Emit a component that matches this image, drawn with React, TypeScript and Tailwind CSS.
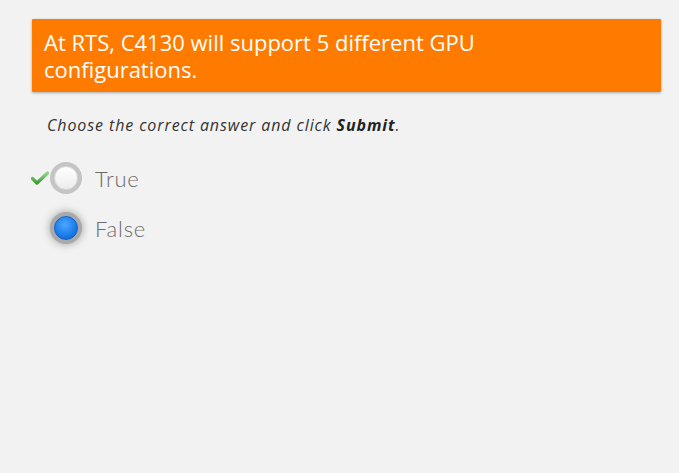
import React from 'react';

interface OptionProps {
  label: string;
  selected?: boolean;
  correct?: boolean;
}

const Option: React.FC<OptionProps> = ({ label, selected, correct }) => {
  return (
    <div className="flex items-center h-[50px]">
      <div className="w-[18px] h-[14px] mr-[1px] flex items-center justify-center">
        {correct && (
          <svg width="18" height="14" viewBox="0 0 18 14">
            <defs>
              <linearGradient id="chk" x1="0" y1="0" x2="0" y2="1">
                <stop offset="0" stopColor="#8fd68a" />
                <stop offset="1" stopColor="#3d9c3a" />
              </linearGradient>
            </defs>
            <path d="M1.5 7.5 L6 12 L16.5 2" fill="none" stroke="url(#chk)" strokeWidth="3.4" strokeLinecap="round" strokeLinejoin="round" />
          </svg>
        )}
      </div>
      {selected ? (
        <div className="w-[32px] h-[32px] rounded-full bg-[#a9a9a9] flex items-center justify-center shadow-[0_0_8px_rgba(0,0,0,0.35)]">
          <div className="w-[24px] h-[24px] rounded-full bg-[radial-gradient(circle_at_45%_35%,#4aa8ff,#1a7ae8_60%,#0c5cc4)] border border-[#1163c9]" />
        </div>
      ) : (
        <div className="w-[32px] h-[32px] rounded-full bg-[#c4c4c4] flex items-center justify-center">
          <div className="w-[24px] h-[24px] rounded-full bg-[linear-gradient(180deg,#ffffff,#ececec)] border border-[#d8d8d8]" />
        </div>
      )}
      <span className="ml-[13px] text-[22px] text-[#6b6b6b] font-['Lato',sans-serif] font-light tracking-[0.8px]">
        {label}
      </span>
    </div>
  );
};

export default function App() {
  return (
    <div className="w-[679px] h-[473px] bg-[#f2f2f2] overflow-hidden font-['Open_Sans',sans-serif]">
      <div className="pt-[19px] pl-[32px] pr-[18px]">
        <div className="bg-[#ff7b00] pl-[12px] pr-[60px] pt-[10px] pb-[9px] shadow-[0_1px_3px_rgba(0,0,0,0.3)] rounded-[1px]">
          <h1 className="text-white text-[22px] leading-[27px] font-medium font-['Open_Sans',sans-serif]">
            At RTS, C4130 will support 5 different GPU configurations.
          </h1>
        </div>
      </div>
      <p className="mt-[21px] ml-[47px] text-[16px] tracking-[0.9px] italic text-[#333] font-['Open_Sans',sans-serif]">
        Choose the correct answer and click <b className="font-bold text-[#222]">Submit</b>.
      </p>
      <div className="mt-[16px] ml-[31px]">
        <Option label="True" correct />
        <Option label="False" selected />
      </div>
    </div>
  );
}
